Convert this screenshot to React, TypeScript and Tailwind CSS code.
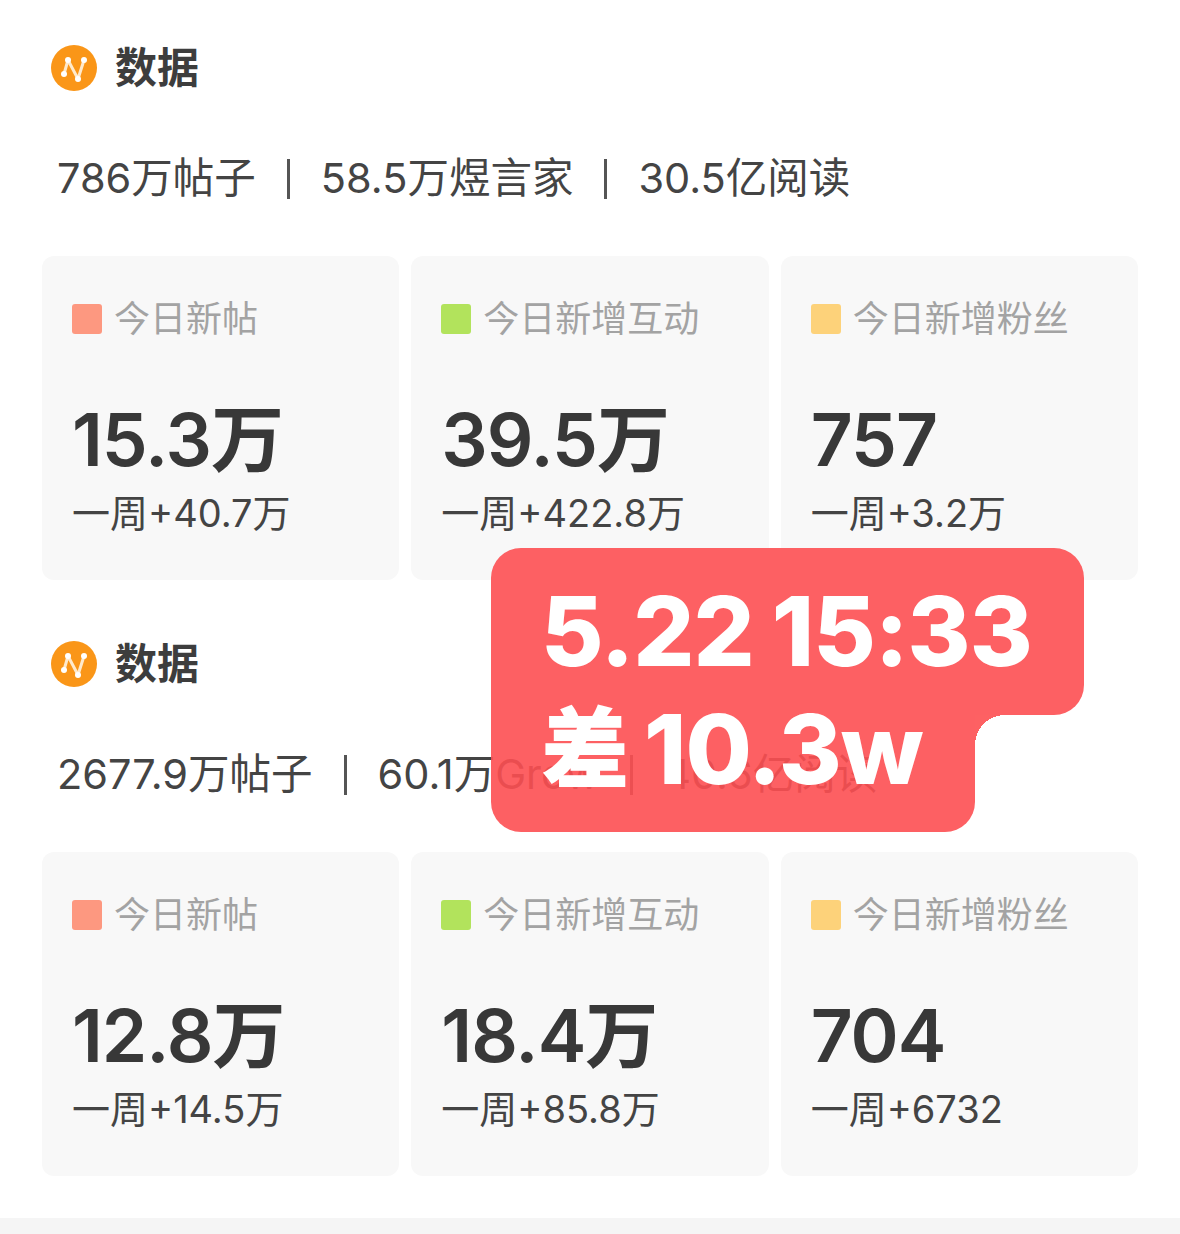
const rows = [
  {
    summary: ['786万帖子', '58.5万煜言家', '30.5亿阅读'],
    cards: [
      { label: '今日新帖', color: 'bg-[#fd9880]', value: '15.3万', week: '一周+40.7万' },
      { label: '今日新增互动', color: 'bg-[#b2e35c]', value: '39.5万', week: '一周+422.8万' },
      { label: '今日新增粉丝', color: 'bg-[#fdd27a]', value: '757', week: '一周+3.2万' },
    ],
  },
  {
    summary: ['2677.9万帖子', '60.1万Grow', '40.6亿阅读'],
    cards: [
      { label: '今日新帖', color: 'bg-[#fd9880]', value: '12.8万', week: '一周+14.5万' },
      { label: '今日新增互动', color: 'bg-[#b2e35c]', value: '18.4万', week: '一周+85.8万' },
      { label: '今日新增粉丝', color: 'bg-[#fdd27a]', value: '704', week: '一周+6732' },
    ],
  },
];

function Logo() {
  return (
    <svg width="46" height="46" viewBox="0 0 46 46" className="shrink-0">
      <circle cx="23" cy="23" r="23" fill="#fa9618" />
      <path d="M13 29 L17 15 L27 34 L33 15" fill="none" stroke="#ffeacc" strokeWidth="3" strokeLinecap="round" strokeLinejoin="round" />
      <circle cx="13" cy="29" r="3" fill="#fff" />
      <circle cx="17" cy="15" r="3" fill="#fff" />
      <circle cx="27" cy="34" r="3" fill="#fff" />
      <circle cx="33" cy="15" r="3" fill="#fff" />
    </svg>
  );
}

function Section({ row }: { row: (typeof rows)[number] }) {
  return (
    <section className="px-[42px]">
      <div className="flex h-[46px] items-center gap-[18px] pl-[9px]">
        <Logo />
        <h2 className="text-[42px] font-bold leading-none text-[#3d3d3d]">数据</h2>
      </div>
      <div className="mt-[63px] flex h-[50px] items-center pl-[15px] text-[41.5px] leading-none text-[#444]">
        {row.summary.map((s, i) => (
          <span key={s} className="flex items-center">
            {i > 0 && <span className="mx-[31px] h-[40px] w-[3px] bg-[#555]" />}
            {s}
          </span>
        ))}
      </div>
      <div className="mt-[52px] grid grid-cols-3 gap-3">
        {row.cards.map((c) => (
          <div key={c.label} className="h-[324px] rounded-xl bg-[#f8f8f8] pl-[30px] pt-[41px]">
            <div className="flex h-[44px] items-center gap-3">
              <span className={`h-[30px] w-[30px] rounded-[3px] ${c.color}`} />
              <span className="text-[36px] leading-none text-[#a3a3a3]">{c.label}</span>
            </div>
            <div className="mt-[62px] text-[73px] font-semibold leading-none tracking-[-1px] text-[#383838]">{c.value}</div>
            <div className="mt-[18px] text-[38px] leading-none text-[#444]">{c.week}</div>
          </div>
        ))}
      </div>
    </section>
  );
}

export default function App() {
  return (
    <div className="relative h-[1234px] overflow-hidden bg-white pt-[45px] font-['Inter','Noto_Sans_CJK_SC',sans-serif]">
      <div className="flex flex-col gap-[61px]">
        {rows.map((r) => (
          <Section key={r.summary[0]} row={r} />
        ))}
      </div>
      <div className="absolute bottom-0 left-0 right-0 h-4 bg-[#f5f5f5]" />
      <div className="absolute left-[491px] top-[548px] h-[284px] w-[593px] text-white">
        <div className="h-[167px] rounded-[30px] rounded-bl-none bg-[#fd4f52]/90 pl-[50px] pt-[35px] text-[96px] font-extrabold leading-none tracking-[-1px] [word-spacing:-2px]">5.22 15:33</div>
        <div className="flex h-[117px] w-[484px] items-start rounded-b-[30px] bg-[#fd4f52]/90 pl-[50px] text-[96px] font-extrabold leading-none tracking-[-1px]">
          <span className="mr-[16px] -mt-[11px] text-[88px]">差</span>
          <span className="-mt-[14px]">10.3w</span>
        </div>
        <div className="absolute left-[484px] top-[167px] h-[30px] w-[30px] bg-[radial-gradient(circle_at_100%_100%,transparent_30px,#fd6163_30px)]" />
      </div>
    </div>
  );
}
